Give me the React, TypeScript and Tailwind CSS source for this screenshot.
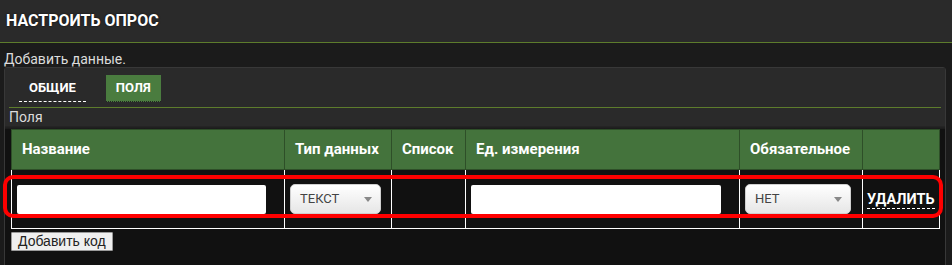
import { FC } from 'react'

const Select: FC<{ label: string; w: string }> = ({ label, w }) => (
  <div
    className={`${w} h-[30px] rounded-[5px] border border-[#cfcfcf] bg-gradient-to-b from-white to-[#e6e6e6] flex items-center justify-between pl-[9px] pr-[8px]`}
  >
    <span className="text-[13px] text-[#444]">{label}</span>
    <svg width="8" height="5" viewBox="0 0 8 5">
      <path d="M0 0h8L4 5z" fill="#888" />
    </svg>
  </div>
)

const App: FC = () => {
  const headers = [
    { t: 'Название', w: 'w-[273px]' },
    { t: 'Тип данных', w: 'w-[107px]' },
    { t: 'Список', w: 'w-[74px]' },
    { t: 'Ед. измерения', w: 'w-[274px]' },
    { t: 'Обязательное', w: 'w-[123px]' },
    { t: '', w: 'w-[77px]' },
  ]

  return (
    <div className="relative w-[952px] h-[265px] overflow-hidden bg-[#1b1b1b] font-['Roboto',sans-serif]">
      {/* page title */}
      <div className="h-[43px] bg-[#2a2a2a] border-b border-[#5d7c2c] flex items-center px-[6px]">
        <h1 className="text-[16px] font-bold text-white [text-shadow:0_0_2px_rgba(0,0,0,0.8)]">
          НАСТРОИТЬ ОПРОС
        </h1>
      </div>

      <p className="pl-[4px] pt-[8px] h-[24px] text-[14px] leading-[16px] text-[#dcdcdc]">
        Добавить данные.
      </p>

      {/* panel */}
      <div className="ml-[4px] w-[942px] h-[200px] rounded-t-[3px] border border-[#383838] bg-[#111]">
        <div className="bg-[#2a2a2a] pt-[6px] px-[4px]">
          <div className="flex items-end gap-[20px] border-b border-[#5d7c2c] h-[34px] pb-[5px] px-[10px]">
            <div className="h-[27px] px-[10px] flex items-center border-b border-dashed border-white">
              <span className="text-[13px] font-bold text-white">ОБЩИЕ</span>
            </div>
            <div className="h-[27px] px-[10px] flex items-center bg-[#4a7c3f] border-b border-dotted border-[#222]">
              <span className="text-[13px] font-bold text-white">ПОЛЯ</span>
            </div>
          </div>
          <div className="h-[18px] pt-[2px] text-[14px] leading-[15px] text-[#dcdcdc]">Поля</div>
        </div>
        <div className="h-[3px] bg-gradient-to-b from-[#262626] to-[#1a1a1a]" />

        <div className="pl-[6px]">
          <table className="border-collapse">
            <thead>
              <tr className="h-[40px] bg-[#44733c]">
                {headers.map((h, i) => (
                  <th
                    key={i}
                    className={`${h.w} border border-[#2e4f28] text-left align-middle px-[10px] text-[15px] font-bold text-white`}
                  >
                    {h.t}
                  </th>
                ))}
              </tr>
            </thead>
            <tbody>
              <tr className="h-[59px]">
                <td className="border border-white px-[5px]">
                  <div className="h-[29px] w-[249px] bg-white rounded-[2px]" />
                </td>
                <td className="border border-white px-[5px]">
                  <Select label="ТЕКСТ" w="w-[91px]" />
                </td>
                <td className="border border-white" />
                <td className="border border-white px-[5px]">
                  <div className="h-[29px] w-[250px] bg-white rounded-[2px]" />
                </td>
                <td className="border border-white px-[5px]">
                  <Select label="НЕТ" w="w-[106px]" />
                </td>
                <td className="border border-white pl-[4px]">
                  <span className="text-[14.5px] font-bold text-white border-b border-dashed border-white leading-[16px]">
                    УДАЛИТЬ
                  </span>
                </td>
              </tr>
            </tbody>
          </table>
          <button className="mt-[2px] h-[19px] px-[6px] bg-[#efefef] border border-[#9a9a9a] rounded-[1px] text-[14px] leading-[15px] text-[#222] font-['Liberation_Sans',sans-serif]">
            Добавить код
          </button>
        </div>
      </div>

      {/* highlight annotation */}
      <div className="absolute left-[3px] top-[175px] w-[940px] h-[43px] border-4 border-[#ff0000] rounded-[10px] pointer-events-none" />
    </div>
  )
}

export default App
